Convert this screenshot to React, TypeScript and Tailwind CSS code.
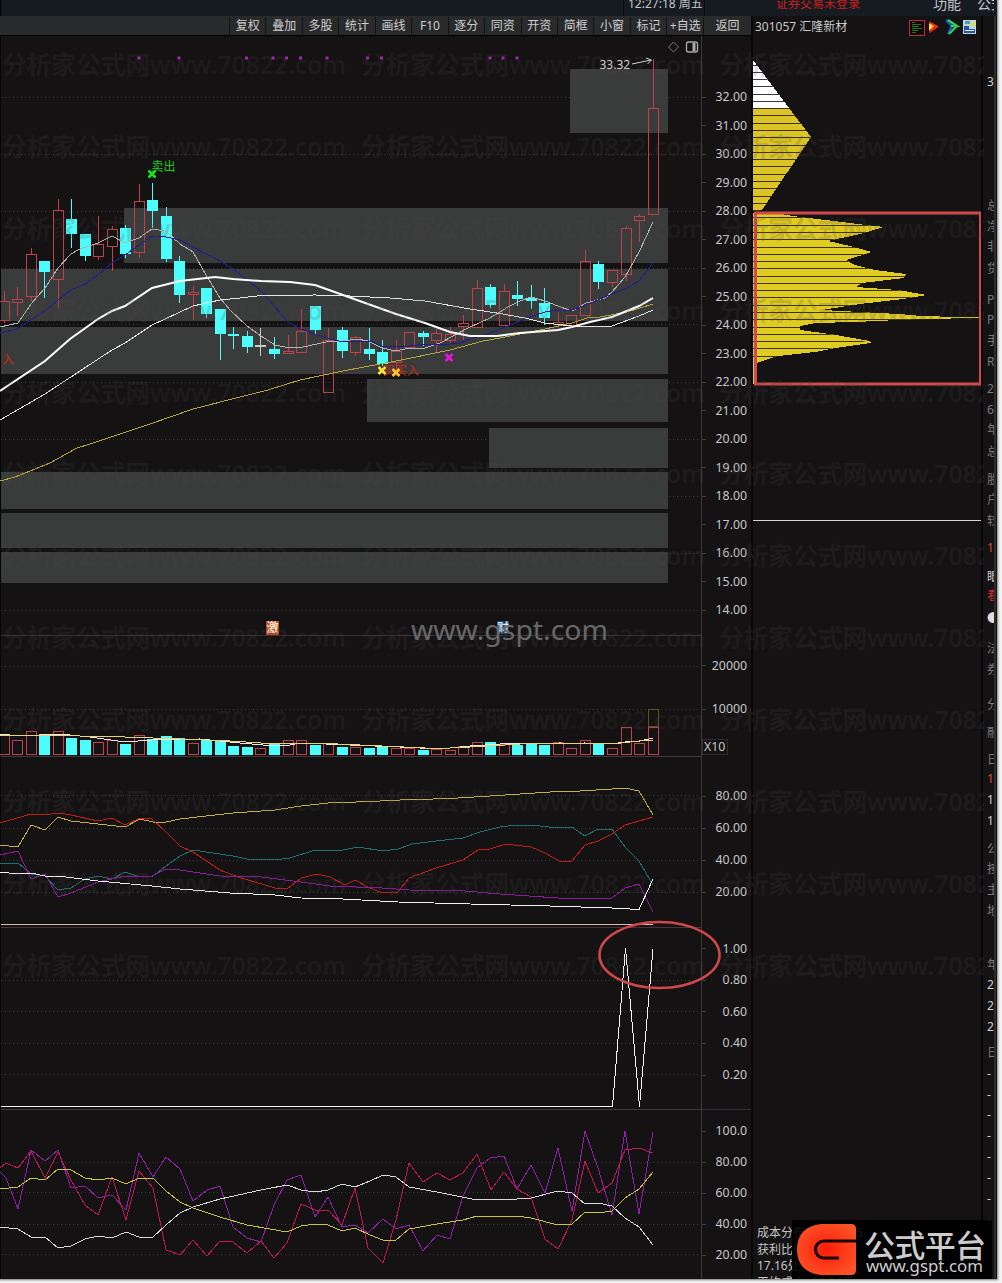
import React from "react";

const FONT = "font-['Noto_Sans','Noto_Sans_CJK_SC',sans-serif]";
const RED = "#c2404c";
const CYAN = "#4dfdfb";
const xAt = (i: number) => 3.6 + 13.52 * i;

// [high, bodyTop, bodyBottom, low, kind]
type Candle = [number, number, number, number, "r" | "c" | "w"];
const candles: Candle[] = [
  [291, 301, 320, 323, "r"], [287, 299, 302, 316, "r"], [248, 254, 296, 301, "r"], [261, 261, 272, 298, "c"],
  [199, 210, 279, 308, "r"], [199, 219, 234, 248, "c"], [234, 234, 256, 261, "c"], [216, 244, 256, 260, "r"],
  [226, 229, 246, 271, "r"], [225, 228, 254, 258, "c"], [184, 201, 252, 258, "r"], [183, 200, 211, 228, "c"],
  [207, 216, 259, 262, "c"], [256, 261, 295, 303, "c"], [286, 292, 294, 320, "r"], [288, 288, 314, 318, "c"],
  [309, 309, 334, 360, "c"], [327, 334, 336, 349, "c"], [331, 336, 347, 353, "c"], [328, 345, 346, 356, "w"],
  [337, 349, 354, 359, "c"], [335, 351, 353, 353, "r"], [309, 331, 352, 352, "r"], [306, 306, 330, 334, "c"],
  [328, 340, 392, 392, "r"], [327, 330, 351, 358, "c"], [336, 337, 352, 356, "r"], [328, 349, 354, 360, "c"],
  [340, 352, 364, 366, "c"], [340, 351, 362, 371, "r"], [332, 332, 347, 347, "r"], [331, 333, 337, 346, "c"],
  [329, 333, 340, 352, "r"], [327, 334, 340, 343, "r"], [315, 323, 326, 340, "r"], [280, 288, 327, 327, "r"],
  [284, 287, 305, 308, "c"], [284, 291, 325, 325, "r"], [281, 295, 299, 306, "c"], [285, 298, 301, 309, "c"],
  [288, 303, 318, 325, "c"], [312, 322, 324, 326, "r"], [315, 315, 325, 325, "r"], [250, 261, 315, 315, "r"],
  [261, 264, 282, 289, "c"], [270, 270, 282, 287, "r"], [226, 228, 274, 281, "r"], [214, 216, 220, 242, "r"],
  [59, 108, 214, 214, "r"],
];

const volumeTops = [
  735, 740, 731, 734, 731, 738, 740, 742, 740, 744, 735, 739, 736, 738, 743, 740, 740, 746, 747, 748, 743, 740, 740, 745,
  743, 747, 747, 748, 746, 748, 748, 750, 749, 750, 746, 742, 742, 744, 745, 744, 745, 742, 748, 740, 743, 748, 727, 743, 727,
];
const volumeKinds = "rrrcrccrrcrcccrccccrcrrcrcrccrrcrrrrcrcccrrrcrrrr";

const boxes = [
  [570, 69, 64], [124, 208, 55], [1, 269, 52], [1, 327, 47], [367, 379, 43],
  [489, 428, 40], [1, 472, 37], [1, 513, 35], [1, 552, 31],
];

const Line = ({ p, c, w = 1 }: { p: string; c: string; w?: number }) => (
  <polyline points={p} fill="none" stroke={c} strokeWidth={w} shapeRendering={w > 1 ? "auto" : "crispEdges"} />
);

const Grid = ({ ys }: { ys: number[] }) => (
  <g stroke="#3b3939" strokeDasharray="1 3" shapeRendering="crispEdges">
    {ys.map((y) => <line key={y} x1="1" x2="701" y1={y + 0.5} y2={y + 0.5} />)}
  </g>
);

const Pane = ({ top, height, cls, children }: { top: number; height: number; cls: string; children: React.ReactNode }) => (
  <svg className={`block w-[701px] shrink-0 ${cls}`} viewBox={`0 ${top} 701 ${height}`}>
    {children}
  </svg>
);

const Cross = ({ x, y, c }: { x: number; y: number; c: string }) => (
  <path d={`M${x - 3.5} ${y - 3.5}l7 7m0 -7l-7 7`} stroke={c} strokeWidth="2.6" />
);

function PricePane() {
  return (
    <Pane top={36} height={599} cls="h-[599px]">
      <Grid ys={[97, 154, 211, 268, 324, 382, 439, 496, 553, 610]} />
      <g fill="#3a3c3b" shapeRendering="crispEdges">
        {boxes.map(([x, y, h]) => <rect key={y} x={x} y={y} width={668 - x} height={h} />)}
      </g>
      <g fill="#a822b2">
        {[139, 179, 246.5, 273, 286.5, 300.5, 327, 367.5, 381.5, 490, 503, 517].map((x) => (
          <rect key={x} x={x - 1.5} y="56.500" width="3" height="3" />
        ))}
      </g>
      <g shapeRendering="crispEdges">
        {candles.map(([h, t, b, l, k], i) => {
          const x = Math.round(xAt(i));
          const c = k === "r" ? RED : k === "c" ? CYAN : "#c8c8c8";
          return (
            <g key={i} stroke={c}>
              <line x1={x + 0.5} x2={x + 0.5} y1={h} y2={t} />
              <line x1={x + 0.5} x2={x + 0.5} y1={b} y2={l} />
              <rect x={x - 4.5} y={t + 0.5} width="10" height={Math.max(b - t - (k === "c" ? 1 : 0), 0.2)} fill={k === "c" ? CYAN : "none"} />
            </g>
          );
        })}
      </g>
      <Line c="#b5b5b0" p="0,327 18,323 31,304 45,288 58,268 71,254 80,249 98,243 112,236 125,243 139,238 152,229 166,231 180,244 193,252 206,275 220,298 230,310 247,326 261,336 275,345 290,348 303,347 317,344 330,341 343,341 357,339 368,341 382,348 396,351 409,348 425,348 440,343 453,336 470,327 490,318 508,307 520,301 531,297 545,301 558,306 572,311 586,303 605,298 612,292 625,277 639,252 653,222" />
      <Line c="#1d1c96" p="0,333 17,329 31,320 45,311 58,300 71,290 85,284 98,275 112,263 125,255 139,245 152,236 166,237 180,240 193,247 206,254 220,261 233,269 247,280 261,291 275,307 288,322 301,329 315,334 330,339 343,342 370,341 382,346 395,347 409,346 425,344 440,345 460,343 470,339 490,333 508,326 520,321 531,317 545,312 558,310 572,310 586,305 612,294 625,289 639,281 653,263" />
      <Line c="#b8a53c" p="0,481 15,477 50,463 77,448 90,444 150,424 193,409 240,397 268,390 300,380 343,371 396,361 450,350 483,341 500,338 545,329 572,323 587,318 600,317 627,312 653,304" />
      <Line c="#e6e6e6" p="0,420 45,394 112,350 125,343 152,325 193,306 220,300 240,298 261,295.5 315,295 350,296 390,298 425,301 470,309 497,313 525,318 545,323 572,326 612,326 639,316 653,310" />
      <Line w={2} c="#ffffff" p="0,391 45,361 70,339 98,319 112,311 125,306 152,288 180,281 215,277 233,279 261,281 290,282 315,285 343,295 368,304 396,314 425,323 450,332 470,336 497,336 520,333 558,330 572,327 590,322 612,317 639,306 653,298" />
      <g fontSize="12" className={FONT}>
        <text x="151.500" y="170.500" fill="#1ec71e">卖出</text>
        <text x="2" y="364" fill="#cb2a1c">入</text>
        <text x="383" y="375" fill="#cb2a1c">买</text>
        <text x="395" y="375" fill="#cb2a1c">买入</text>
        <text x="599.500" y="69" fill="#d8d8d8">33.32</text>
      </g>
      <Cross x={152} y={174} c="#17e617" />
      <Cross x={382} y={370.5} c="#ffe52f" />
      <Cross x={396} y={372.5} c="#ffc32f" />
      <Cross x={449} y={357.5} c="#e814dc" />
      <path d="M632 64l19 -4m-5 -2l5.500 2l-4 4" stroke="#d8d8d8" fill="none" />
      <path d="M673.500 42l5 5l-5 5l-5 -5z" stroke="#777" fill="none" />
      <rect x="686.500" y="42" width="11" height="10" rx="2" fill="none" stroke="#aaa" strokeWidth="1.300" />
      <rect x="692.500" y="43" width="3" height="8" fill="#aaa" />
      <rect x="266" y="621" width="13" height="14" fill="#b64a1c" />
      <text x="266.500" y="632" fontSize="12" fontWeight="700" fill="#fbe3cf" className={FONT}>激</text>
      <rect x="497" y="621" width="12" height="13" fill="#1b436c" />
      <text x="497" y="632" fontSize="12" fontWeight="700" fill="#d2e6f5" className={FONT}>财</text>
    </Pane>
  );
}

function VolumePane() {
  return (
    <Pane top={635} height={121} cls="h-[121px]">
      <line x1="1" x2="701" y1="635.500" y2="635.500" stroke="#343234" />
      <Grid ys={[666, 709]} />
      <g shapeRendering="crispEdges">
        {volumeTops.map((t, i) => {
          const x = Math.round(xAt(i));
          const cy = volumeKinds[i] === "c";
          return <rect key={i} x={x - 4.5} y={t + 0.5} width="10" height={754 - t} stroke={cy ? CYAN : RED} fill={cy ? CYAN : "none"} />;
        })}
        <rect x="648.500" y="709.500" width="10" height="17" fill="none" stroke="#5a5716" />
      </g>
      <Line c="#ede8e0" p="0,734 20,736 60,734 90,737 125,742 152,740 200,739 240,743 275,746 290,745 301,743 350,745 400,747 440,749 470,746 500,744 585,743 612,744 625,742 640,741 653,738" />
      <Line c="#e8d477" p="0,735 60,735 80,736 125,737 180,739 230,741 261,743 315,743 360,745 382,746 425,748 450,748 490,746 520,744 560,743 612,744 639,741 653,740" />
    </Pane>
  );
}

function TrendPane() {
  return (
    <Pane top={756} height={171} cls="h-[171px]">
      <line x1="1" x2="701" y1="756.500" y2="756.500" stroke="#3d3b3d" />
      <Grid ys={[795, 828, 860, 892]} />
      <Line c="#c2b04c" p="0,845 18,847 31,825 45,830 58,817 71,821 98,824 125,827 140,819 153,822 166,822 180,819 206,816 233,813 275,810 301,806 328,803 370,801.5 400,800 450,798.5 490,796 550,792 580,791 612,789 625,788 639,791 653,815" />
      <Line c="#c01c18" p="0,823 31,814 45,815 58,813 71,815 98,821 112,818 125,825 140,818 152,819 166,832 180,846 193,852 220,870 238,877 275,888 287,889 301,878 317,874 330,877 345,885 355,880 368,887 382,893 398,892 409,878 436,868 463,860 478,850 490,849 506,844 531,847 545,853 561,862 572,861 585,845 598,841 612,834 625,825 653,817" />
      <Line c="#1f7272" p="0,863 18,863 31,874 45,876 58,890 71,888 85,879 98,876 112,879 125,872 140,877 153,876 166,866 180,856 193,850 206,852 233,856 247,859 275,860 290,858 315,850 343,850 358,847 383,851 398,849 412,844 436,841 463,838 480,832 500,827 516,825 531,825 558,828 572,827 585,836 598,829 612,829 625,847 639,861 653,885" />
      <Line c="#8c1a9c" p="0,855 18,851 31,879 45,874 58,897 71,893 98,882 125,876 152,876 166,869 180,870 220,876 261,877 301,882 330,886 382,888 409,890 465,891 500,894 558,898 585,898 612,898 625,888 639,884 653,912" />
      <Line c="#f2f2f2" p="0,872 18,874 31,873 45,876 58,876 98,881 152,886 180,889 230,893 275,895 301,898 343,899 398,902 470,904 550,906 612,908 639,909.5 653,879" />
      <line x1="1" x2="653" y1="924.500" y2="924.500" stroke="#e0b8b8" />
    </Pane>
  );
}

function SignalPane() {
  return (
    <Pane top={927} height={182} cls="h-[182px]">
      <line x1="1" x2="701" y1="927.500" y2="927.500" stroke="#453536" />
      <Grid ys={[980, 1011, 1043, 1074]} />
      <Line c="#f4f4f4" p="1,1106.5 612.5,1106.5 625.5,948 639.5,1106.5 653,949" />
    </Pane>
  );
}

function OscillatorPane() {
  return (
    <Pane top={1109} height={170} cls="h-[170px]">
      <line x1="1" x2="701" y1="1109.500" y2="1109.500" stroke="#3d3b40" />
      <Grid ys={[1162, 1192, 1224, 1254]} />
      <Line c="#8f1fa6" p="0,1172 6,1178 18,1209 31,1150 45,1161 58,1150 71,1188 85,1186 98,1198 112,1195 126,1210 139,1153 153,1177 166,1157 180,1169 193,1201 207,1190 220,1186 233,1227 247,1238 261,1242 274,1205 287,1180 301,1175 315,1217 328,1197 342,1227 355,1225 368,1233 383,1219 396,1229 409,1225 423,1251 437,1235 450,1239 463,1196 477,1168 490,1158 504,1156 517,1189 531,1165 545,1193 558,1148 572,1211 585,1131 598,1168 612,1215 625,1131 639,1214 653,1132" />
      <Line c="#c01850" p="0,1168 6,1163 18,1168 31,1151 45,1178 58,1152 71,1180 85,1205 98,1215 112,1177 126,1220 139,1171 153,1188 166,1250 180,1255 193,1240 207,1256 220,1241 233,1242 247,1253 261,1241 274,1258 287,1243 301,1204 315,1210 328,1210 342,1225 355,1188 368,1248 383,1263 396,1220 409,1163 423,1182 437,1173 450,1180 463,1173 477,1154 491,1190 504,1172 517,1189 531,1197 545,1239 558,1249 572,1220 585,1161 598,1193 612,1183 625,1150 639,1148 653,1153" />
      <Line c="#c6c646" p="0,1189 18,1187 31,1178 45,1180 58,1169 71,1170 85,1178 98,1180 112,1178 126,1184 139,1178 153,1178 166,1191 180,1202 193,1208 220,1217 247,1225 287,1232 301,1226 315,1224 328,1225 342,1231 355,1228 370,1235 383,1240 396,1240 409,1229 437,1224 463,1220 477,1216 504,1216 517,1216 531,1218 558,1225 572,1224 585,1212 598,1213 612,1211 625,1198 639,1189 653,1172" />
      <Line c="#d9d9d9" p="0,1227 18,1229 31,1237 45,1237 58,1248 71,1246 85,1239 98,1236 112,1238 126,1232 139,1237 153,1237 166,1225 180,1213 193,1207 220,1199 261,1190 287,1185 301,1190 315,1192 328,1190 342,1184 355,1187 370,1181 383,1175 396,1177 409,1187 437,1192 477,1200 490,1199 504,1200 531,1198 558,1191 572,1193 585,1204 598,1203 612,1206 625,1218 639,1227 653,1245" />
    </Pane>
  );
}

const AxisLabel = ({ text, h }: { text: string; h: string }) => (
  <div className={`flex items-center justify-between pr-[4px] ${h}`}>
    <span className="h-px w-1 bg-[#3d3b3d]" />
    <span>{text}</span>
  </div>
);

function Axis() {
  const prices = Array.from({ length: 19 }, (_, i) => `${32 - i}.00`);
  return (
    <div className="flex w-[50px] shrink-0 flex-col border-l border-[#3a383a] text-[12.300px] leading-none text-[#c9c9c9]">
      <div className="h-[599px] pt-[47px]">
        {prices.map((p) => <AxisLabel key={p} text={p} h="h-[28.500px]" />)}
      </div>
      <div className="h-[121px] pt-[9px]">
        <AxisLabel text="20000" h="h-[43.500px]" />
        <AxisLabel text="10000" h="h-[43.500px]" />
        <div className="mt-[8px] flex h-4 w-[26px] items-center border border-[#2e2c2e] pl-px">X10</div>
      </div>
      <div className="h-[171px] pt-6">
        {["80.00", "60.00", "40.00", "20.00"].map((t) => <AxisLabel key={t} text={t} h="h-8" />)}
      </div>
      <div className="h-[182px] pt-[6px]">
        {["1.00", "0.80", "0.60", "0.40", "0.20"].map((t) => <AxisLabel key={t} text={t} h="h-[31.600px]" />)}
      </div>
      <div className="h-[170px] border-t border-[#33313f] pt-[6px]">
        {["100.0", "80.00", "60.00", "40.00", "20.00"].map((t) => <AxisLabel key={t} text={t} h="h-[31px]" />)}
      </div>
    </div>
  );
}

const tools = ["复权", "叠加", "多股", "统计", "画线", "F10", "逐分", "同资", "开资", "简框", "小窗", "标记"];

function Toolbar() {
  return (
    <div className="flex h-5 border-b border-black bg-[#292a2b] pt-px text-xs leading-none text-[#cfcfcf]">
      <div className="w-[229px]" />
      {tools.map((t) => (
        <div key={t} className="flex w-[36.450px] items-center justify-center border-l border-[#121212]">{t}</div>
      ))}
      <div className="flex w-[37px] items-center justify-center border-l border-[#121212] whitespace-nowrap">+自选</div>
      <div className="flex flex-1 items-center justify-center border-l border-[#121212]">返回</div>
    </div>
  );
}

function CostPanel() {
  const stripes = Array.from({ length: 41 }, (_, i) => 65 + i * 7.28);
  return (
    <div className="flex w-[232px] shrink-0 flex-col border-x-2 border-[#080708]">
      <div className="flex h-5 items-center pl-[2px] pt-px text-xs text-[#c9c9c9]">
        <span className="flex-1">301057 汇隆新材</span>
        <svg className="h-5 w-[76px]" viewBox="905 16 76 20">
          <rect x="909.500" y="19.500" width="15" height="15" fill="#160606" stroke="#b82c44" />
          <path d="M912 21.500h3M912 23.500h9M912 25.500h7M912 27.500h10M912 29.500h6M912 31.500h4" stroke="#177a1c" />
          <path d="M929 20l10 5.500l-10 7l2 -6z" fill="#ef2414" />
          <path d="M929 22l5 3l-5 5z" fill="#f9d339" />
          <path d="M946 19l6 6l-4 8" fill="none" stroke="#1757c4" strokeWidth="2.500" />
          <path d="M948 19l9 6h-6m6 0l-8 8" fill="none" stroke="#2fd24f" strokeWidth="2.200" />
          <rect x="963" y="19" width="13" height="14" fill="#bfd8d8" />
          <path d="M964 25h5v3h6v4h-11z" fill="#2454a4" />
          <path d="M965 20h5v3h-5z" fill="#3f9fc2" />
          <path d="M971 21h4v4h-4z" fill="#e6d84c" />
          <path d="M965 29.500h9" stroke="#e8f0f4" />
        </svg>
      </div>
      <svg className="block h-[1184px] w-[228px]" viewBox="753 36 228 1184">
        <clipPath id="profile">
          <path d="M753 60L811 137L762 210L753 213H775L793 216L858 224L884 227L860 234L828 241L850 246L872 252L846 260L855 265L875 270L906 274L904 278L862 283L856 287L898 290L927 295L903 299L860 304L822 310L899 314L980 317L855 322L800 326V330L830 334L871 343L835 348L778 356L753 364z" />
        </clipPath>
        <g shapeRendering="crispEdges">
          <path d="M753 60L789 108H753z" fill="#ffffff" />
          <path d="M753 108H789L811 137L762 210H753z" fill="#dcc426" />
          <path d="M753 213H775L793 216L858 224L884 227L860 234L828 241L850 246L872 252L846 260L855 265L875 270L906 274L904 278L862 283L856 287L898 290L927 295L903 299L860 304L822 310L899 314L922 316L958 317H981V318L921 319L855 322L815 323L800 326V330L830 334L870 341L871 343L835 348L815 352L778 356L757 363V384H753z" fill="#dfcb22" />
          {stripes.map((y) => (
            <line key={y} x1="753" x2="981" y1={y} y2={y} stroke={y < 108 ? "#3c3847" : "#3d340c"} clipPath="url(#profile)" />
          ))}
        </g>
        <rect x="755.500" y="213" width="225" height="171" fill="none" stroke="#d0494b" strokeWidth="3" />
        <line x1="753" x2="981" y1="520.500" y2="520.500" stroke="#d6d6d6" />
      </svg>
      <div className="h-[59px] overflow-hidden whitespace-nowrap pl-[4px] pt-[5px] text-xs leading-[16.500px] text-[#c4c4c4]">
        <div>成本分布日期: 2025</div>
        <div>获利比例:</div>
        <div>17.16处获利盘</div>
        <div>平均成本: 25.36元</div>
      </div>
    </div>
  );
}

type Note = [string, number, string];
const G = "text-[#7b7b7b]";
const W = "text-[#cfcfcf]";
const notes: Note[] = [
  ["3", 82, W], ["总", 206, G], ["净", 227, G], ["非", 247, G], ["货", 269, G], ["P", 300, G], ["P", 320, G], ["手", 341, G], ["R", 362, G],
  ["2", 389, G], ["6", 410, G], ["年", 430, G], ["总", 452, G], ["股", 480, G], ["户", 500, G], ["较", 521, G],
  ["1", 548, "text-[#d0552a]"], ["眼", 577, W], ["看", 596, "text-[#d02a2a]"], ["●", 619, "text-[#e9d8d4]"], ["法", 649, G], ["券", 670, G],
  ["分", 705, G], ["融", 733, G], ["日", 760, G], ["1", 779, "text-[#d0552a]"], ["1", 800, W], ["1", 821, W], ["公", 849, G],
  ["按", 869, G], ["主", 890, G], ["地", 911, G], ["年", 965, G], ["2", 985, W], ["2", 1006, W], ["2", 1027, W], ["日", 1053, G],
  ["-", 1074, W], ["-", 1095, W], ["-", 1115, W], ["-", 1136, W], ["-", 1157, W], ["-", 1178, W], ["-", 1199, W], ["-", 1220, W],
];

function SideStrip() {
  return (
    <div className="flex w-[13px] shrink-0 flex-col overflow-hidden border-r-2 border-[#2c2c2c] pl-[4px] pt-[58px] text-xs leading-4">
      {notes.map(([t, y, c], i) => (
        <div key={y} className={`shrink-0 ${c}`} style={{ height: (notes[i + 1]?.[1] ?? y + 20) - y }}>{t}</div>
      ))}
    </div>
  );
}

function Watermarks() {
  return (
    <div className="pointer-events-none absolute left-[2px] top-[46px] h-[960px] w-[982px] overflow-hidden">
      {Array.from({ length: 12 }, (_, r) => (
        <div key={r} className="flex h-[81.900px] w-[1080px] text-[#4b4446]/20">
          {[0, 1, 2].map((k) => (
            <svg key={k} className="h-10 w-[358.500px] shrink-0" fill="currentColor">
              <text x="0" y="28" fontSize="25.500" fontWeight="600" textLength="344" lengthAdjust="spacingAndGlyphs" className={FONT}>分析家公式网www.70822.com</text>
            </svg>
          ))}
        </div>
      ))}
    </div>
  );
}

function Brand() {
  return (
    <div className="absolute left-[792px] top-[1220px] flex h-[59px] w-[200px] items-center bg-black/90">
      <svg className="ml-[5px] h-[51px] w-[59px] shrink-0" viewBox="0 0 59 51">
        <defs>
          <radialGradient id="flame" cx="0.5" cy="0.5" r="0.6">
            <stop offset="0" stopColor="#ff1c08" />
            <stop offset="1" stopColor="#fa5428" />
          </radialGradient>
        </defs>
        <path d="M24 0H54Q59 0 59 5V46Q59 51 54 51H24Q0 48 0 25.500Q0 3 24 0z" fill="url(#flame)" />
        <path d="M59 17H27A8.500 8.500 0 0 0 27 34H42" fill="none" stroke="#180503" strokeWidth="3.200" />
      </svg>
      <svg className="ml-[8px] h-[56px] w-[124px] text-[#cccccc]" viewBox="0 0 124 56" fill="currentColor">
        <text x="0" y="34.500" fontSize="31" fontWeight="500" textLength="122" className={FONT}>公式平台</text>
        <text x="2" y="50" fontSize="15.500" textLength="117" lengthAdjust="spacingAndGlyphs" className={FONT}>www.gspt.com</text>
      </svg>
    </div>
  );
}

export default function App() {
  return (
    <div className={`relative h-[1283px] w-[1002px] overflow-hidden bg-[#f4f3f3] ${FONT}`}>
      <div className="flex h-[1279px] w-[997px] flex-col border-l border-[#050505] bg-[#141213] shadow-[0_0_2px_1px_#777]">
        <div className="flex h-4 shrink-0 overflow-hidden bg-[#161b22] text-xs leading-[8px] whitespace-nowrap text-[#c4c8cc]">
          <div className="w-[622px]" />
          <div className="w-[82px] border-x border-[#080a0c] pl-1 leading-[7px]">12:27:18 周五</div>
          <div className="w-[228px] pl-[71px] leading-[8px] text-[#d01c1c]">证券交易未登录</div>
          <div className="w-[44px] text-[14px] leading-[8px]">功能</div>
          <div className="w-[17px] overflow-hidden text-[14px] leading-[8px]">公式</div>
        </div>
        <div className="-ml-px flex min-h-0 flex-1">
          <div className="flex w-[751px] shrink-0 flex-col">
            <Toolbar />
            <div className="flex">
              <div className="flex w-[701px] shrink-0 flex-col">
                <PricePane />
                <VolumePane />
                <TrendPane />
                <SignalPane />
                <OscillatorPane />
              </div>
              <Axis />
            </div>
          </div>
          <CostPanel />
          <SideStrip />
        </div>
      </div>
      <Watermarks />
      <svg className="pointer-events-none absolute left-[409px] top-[610px] h-[40px] w-[202px]" viewBox="0 0 202 40">
        <text x="2" y="30" fontSize="27" fill="#686868" textLength="197" lengthAdjust="spacingAndGlyphs" className={FONT}>www.gspt.com</text>
      </svg>
      <svg className="pointer-events-none absolute left-[596px] top-[918px] h-[74px] w-[128px]" viewBox="0 0 128 74">
        <ellipse cx="63.500" cy="37" rx="60" ry="33" fill="none" stroke="#cf4749" strokeWidth="2.600" />
      </svg>
      <Brand />
    </div>
  );
}
